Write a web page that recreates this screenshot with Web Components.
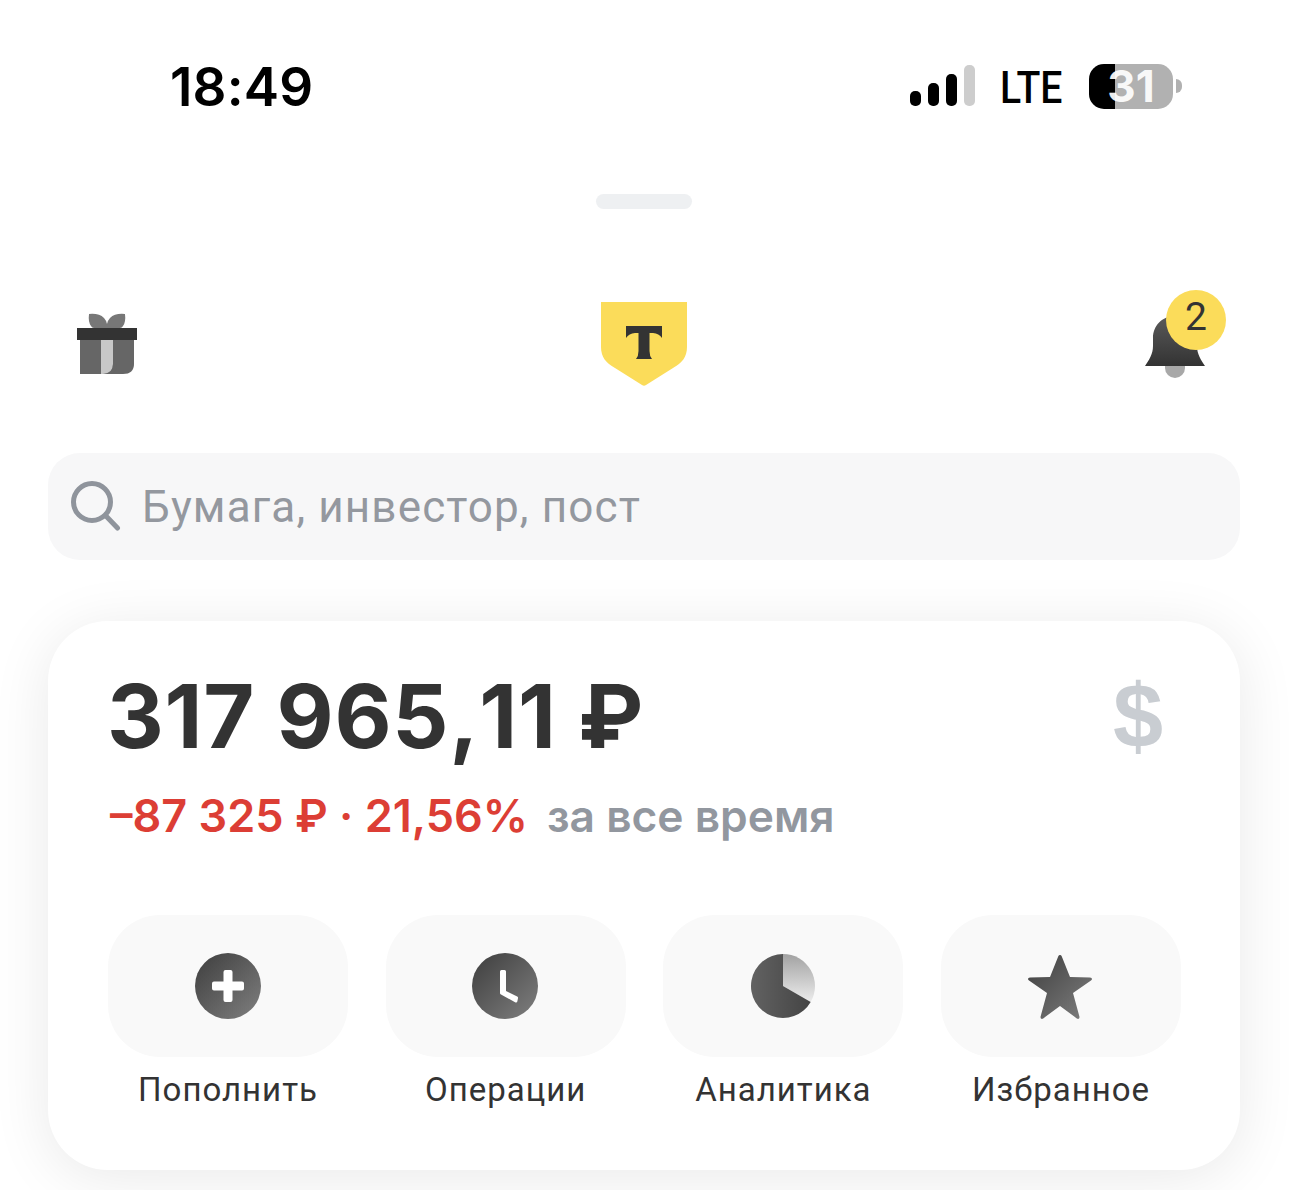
<!DOCTYPE html>
<html lang="ru">
<head>
<meta charset="utf-8">
<title>Пульс</title>
<style>
  html, body { margin: 0; background: #fff; }
  body { width: 1289px; height: 1190px; overflow: hidden; font-family: Roboto, "Liberation Sans", sans-serif; }
</style>
</head>
<body>
<app-status-bar time="18:49" battery="31"></app-status-bar>
<app-handle></app-handle>
<app-top-nav count="2"></app-top-nav>
<app-search placeholder="Бумага, инвестор, пост"></app-search>
<app-balance-card amount="317 965,11 ₽" change="–87 325 ₽ · 21,56%" period="за все время">
  <app-action label="Пополнить" icon="plus"></app-action>
  <app-action label="Операции" icon="clock"></app-action>
  <app-action label="Аналитика" icon="pie"></app-action>
  <app-action label="Избранное" icon="star"></app-action>
</app-balance-card>

<script>
const GRAD = `<defs><linearGradient id="g" x1="0" y1="0" x2="1" y2="1">
  <stop offset=".1" stop-color="#444"/><stop offset=".95" stop-color="#7c7c7c"/></linearGradient></defs>`;

const ICONS = {
  plus: `<svg width="66" height="66" viewBox="0 0 66 66">${GRAD}
    <circle cx="33" cy="33" r="33" fill="url(#g)"/>
    <path d="M28.500 19a2 2 0 0 1 2-2h5a2 2 0 0 1 2 2v9.500H47a2 2 0 0 1 2 2v5a2 2 0 0 1-2 2h-9.500V47a2 2 0 0 1-2 2h-5a2 2 0 0 1-2-2v-9.500H19a2 2 0 0 1-2-2v-5a2 2 0 0 1 2-2h9.500z" fill="#fff"/></svg>`,
  clock: `<svg style="margin-left:-2px" width="66" height="66" viewBox="0 0 66 66">${GRAD}
    <circle cx="33" cy="33" r="33" fill="url(#g)"/>
    <path d="M28 18.500q0-1.500 1.500-1.500h3q1.500 0 1.500 1.500V38l11.200 5.600q1 .5.800 1.600l-.7 3.300q-.4 1.500-1.800.9L29 41.500q-1-.5-1-1.500z" fill="#fff"/></svg>`,
  pie: `<svg width="66" height="66" viewBox="0 0 66 66">
    <defs>
      <linearGradient id="d" x1="0" y1="0" x2="1" y2="0"><stop offset="0" stop-color="#626262"/><stop offset="1" stop-color="#444"/></linearGradient>
      <linearGradient id="l" x1="0" y1="0" x2="0" y2="1"><stop offset="0" stop-color="#a2a2a2"/><stop offset="1" stop-color="#ececec"/></linearGradient>
    </defs>
    <path d="M33 33V1a32 32 0 0 1 27.700 48z" fill="url(#l)"/>
    <path d="M33 33V1a32 32 0 1 0 27.700 48z" fill="url(#d)"/></svg>`,
  star: `<svg style="margin-left:-2px" width="66" height="66" viewBox="0 0 66 66">${GRAD}
    <path d="M33 2q1.200 0 1.700 1.300L43 24l20 .6q2 .1 2 1.400 0 .8-1 1.500L46 40l6.400 23.600q.3 1.700-.8 2.200-.8.300-1.800-.4L33 53 16.200 65.400q-1 .7-1.800.4-1.100-.5-.8-2.200L20 40 2 27.500q-1-.7-1-1.500 0-1.300 2-1.400L23 24l8.300-20.700Q31.800 2 33 2z" fill="url(#g)"/></svg>`
};

customElements.define('app-status-bar', class extends HTMLElement {
  constructor() {
    super();
    this.attachShadow({ mode: 'open' }).innerHTML = `
      <style>
        :host { display: flex; align-items: center; justify-content: space-between; height: 172px; padding: 0 107px 0 170px; box-sizing: border-box; color: #000; }
        .time { font: 600 53px/1 Inter, sans-serif; margin-top: 2px; letter-spacing: .2px; }
        .right { display: flex; align-items: center; }
        .signal { margin: -2px 0 0 -1px; }
        .lte { font: 500 45px/1 Roboto, sans-serif; width: 62px; margin: 3px 27px 0 25px; transform: scaleX(.87); transform-origin: left center; white-space: nowrap; }
        .battery { position: relative; width: 84px; height: 45px; border-radius: 15px; background: linear-gradient(90deg, #000 31%, #b1b1b1 31%); }
        .battery span { position: absolute; left: 0; right: 0; top: 0; bottom: 0; display: flex; align-items: center; justify-content: center; color: #fff; font: 700 44px/1 Inter, sans-serif; opacity: .92; }
        .nub { width: 6px; height: 14px; margin-left: 3px; border-radius: 0 7px 7px 0; background: #b1b1b1; }
      </style>
      <div class="time">${this.getAttribute('time')}</div>
      <div class="right">
        <svg class="signal" width="65" height="41" viewBox="0 0 65 41">
          <rect x="0" y="26" width="11" height="15" rx="5"/>
          <rect x="18" y="18" width="11" height="23" rx="5"/>
          <rect x="36" y="9" width="11" height="32" rx="5"/>
          <rect x="54" y="0" width="11" height="41" rx="5" fill="#cdcdcd"/>
        </svg>
        <div class="lte">LTE</div>
        <div class="battery"><span>${this.getAttribute('battery')}</span></div>
        <div class="nub"></div>
      </div>`;
  }
});

customElements.define('app-handle', class extends HTMLElement {
  constructor() {
    super();
    this.attachShadow({ mode: 'open' }).innerHTML = `
      <style>
        :host { display: block; width: 96px; height: 15px; margin: 22px 0 0 596px; border-radius: 8px; background: #eef0f2; }
      </style>`;
  }
});

customElements.define('app-top-nav', class extends HTMLElement {
  constructor() {
    super();
    this.attachShadow({ mode: 'open' }).innerHTML = `
      <style>
        :host { display: flex; align-items: flex-start; justify-content: space-between; height: 244px; box-sizing: border-box; padding: 80px 84px 0 77px; }
        .gift { margin-top: 24px; }
        .logo { margin: 12px 0 0 5px; }
        .bell { position: relative; width: 60px; height: 64px; margin-top: 25px; }
        .badge { position: absolute; left: 21px; top: -24px; width: 60px; height: 60px; border-radius: 50%; background: #fbdc5a; color: #333; font: 400 39px/54px Roboto, sans-serif; text-align: center; }
      </style>
      <svg class="gift" width="60" height="62" viewBox="0 0 60 62">
        <path d="M12 1q10-1 15 4 2 2 3 6 1-4 3-6 5-5 15-4 1 8-2 12-1 2-3 2H17q-2 0-3-2-3-4-2-12z" fill="#777"/>
        <path d="M3 27h54v24q0 10-11 10H3z" fill="#666"/>
        <path d="M24 27h12v24q0 9-10 10h-2z" fill="#c8c8c8"/>
        <path d="M30 61q6-2 6-10V27h4v24q0 8-6 10z" fill="#666"/>
        <rect y="15" width="60" height="12" fill="#333"/>
      </svg>
      <svg class="logo" width="86" height="86" viewBox="0 0 86 86">
        <path d="M0 1H86V46C86 56 81 62 72 67L45 84Q43 85.500 41 84L14 67C5 62 0 56 0 46Z" fill="#fbdc5a"/>
        <path d="M25 25H61V37Q58 32.500 52 32H48.500V50Q48.500 55 51 58H35Q37.500 55 37.500 50V32H34Q28 32.500 25 37Z" fill="#333"/>
      </svg>
      <div class="bell">
        <svg width="60" height="64" viewBox="0 0 60 64">
          <defs><linearGradient id="b" x1="0" y1="0" x2="0" y2="1"><stop offset="0" stop-color="#5a5a5a"/><stop offset="1" stop-color="#333"/></linearGradient></defs>
          <path d="M20 52h20v2a10 10 0 0 1-20 0z" fill="#a8a8a8"/>
          <path d="M30 2C17 2 8 12 8 24V32C8 40 4 46 0 52H60C56 46 52 40 52 32V24C52 12 43 2 30 2Z" fill="url(#b)"/>
        </svg>
        <div class="badge">${this.getAttribute('count')}</div>
      </div>`;
  }
});

customElements.define('app-search', class extends HTMLElement {
  constructor() {
    super();
    this.attachShadow({ mode: 'open' }).innerHTML = `
      <style>
        :host { display: flex; align-items: center; gap: 21px; height: 107px; margin: 0 49px 0 48px; padding: 0 0 0 23px; box-sizing: border-box; border-radius: 32px; background: #f7f7f8; color: #94989f; }
        span { font: 400 44px/1 Roboto, sans-serif; letter-spacing: 1.15px; white-space: nowrap; }
        svg { flex: none; margin-top: -2px; }
      </style>
      <svg width="50" height="50" viewBox="0 0 50 50" fill="none" stroke="#8f949c" stroke-width="5" stroke-linecap="round">
        <circle cx="21" cy="21" r="18.500"/><path d="M34.500 34.500L46.500 47"/>
      </svg>
      <span>${this.getAttribute('placeholder')}</span>`;
  }
});

customElements.define('app-balance-card', class extends HTMLElement {
  constructor() {
    super();
    this.attachShadow({ mode: 'open' }).innerHTML = `
      <style>
        :host { display: block; height: 549px; margin: 61px 49px 0 48px; padding: 50px 59px 0 60px; box-sizing: border-box; border-radius: 60px; background: #fff; box-shadow: 0 8px 60px rgba(0,0,0,.09); }
        .top { display: flex; justify-content: space-between; align-items: flex-start; height: 90px; }
        .amount { font: 700 88px/90px Inter, sans-serif; font-kerning: none; color: #333; letter-spacing: .7px; white-space: nowrap; margin-left: -1px; }
        .usd { font: 700 90px/90px "Liberation Sans", sans-serif; color: #c9cdd2; margin-right: 18px; }
        .sub { display: flex; align-items: baseline; gap: 19px; margin-top: 28px; padding-left: 2px; line-height: 54px; white-space: nowrap; font-family: Inter, sans-serif; font-weight: 600; }
        .change { color: #dc3e35; font-size: 45px; }
        .period { color: #92979f; font-size: 44.300px; }
        .actions { display: grid; grid-template-columns: repeat(4, 240px); justify-content: space-between; margin-top: 72px; }
      </style>
      <div class="top">
        <div class="amount">${this.getAttribute('amount')}</div>
        <div class="usd">$</div>
      </div>
      <div class="sub">
        <span class="change">${this.getAttribute('change')}</span>
        <span class="period">${this.getAttribute('period')}</span>
      </div>
      <div class="actions"><slot></slot></div>`;
  }
});

customElements.define('app-action', class extends HTMLElement {
  constructor() {
    super();
    this.attachShadow({ mode: 'open' }).innerHTML = `
      <style>
        :host { display: flex; flex-direction: column; align-items: center; }
        .tile { display: flex; align-items: center; justify-content: center; width: 240px; height: 142px; border-radius: 52px; background: #f9f9f9; }
        .label { margin-top: 14px; font: 400 33px/38px Roboto, sans-serif; letter-spacing: 1px; color: #333; white-space: nowrap; }
      </style>
      <div class="tile">${ICONS[this.getAttribute('icon')]}</div>
      <div class="label">${this.getAttribute('label')}</div>`;
  }
});
</script>
</body>
</html>
